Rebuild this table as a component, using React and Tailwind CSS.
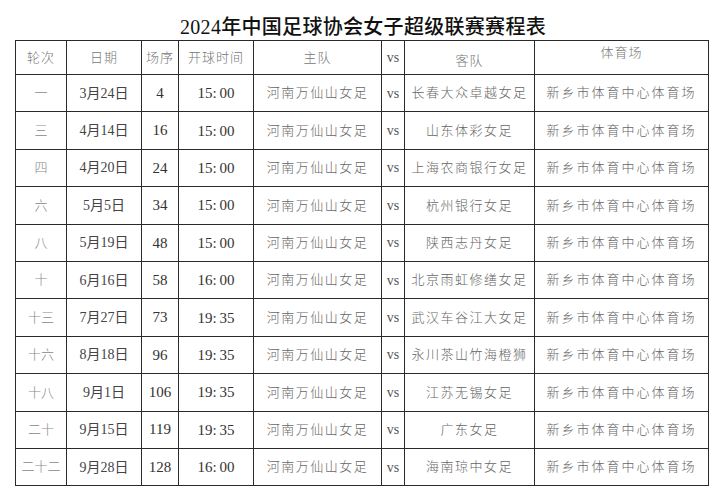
import React from "react";

const rows = [
  ["一", "3月24日", "4", "15:00", "长春大众卓越女足"],
  ["三", "4月14日", "16", "15:00", "山东体彩女足"],
  ["四", "4月20日", "24", "15:00", "上海农商银行女足"],
  ["六", "5月5日", "34", "15:00", "杭州银行女足"],
  ["八", "5月19日", "48", "15:00", "陕西志丹女足"],
  ["十", "6月16日", "58", "16:00", "北京雨虹修缮女足"],
  ["十三", "7月27日", "73", "19:35", "武汉车谷江大女足"],
  ["十六", "8月18日", "96", "19:35", "永川茶山竹海橙狮"],
  ["十八", "9月1日", "106", "19:35", "江苏无锡女足"],
  ["二十", "9月15日", "119", "19:35", "广东女足"],
  ["二十二", "9月28日", "128", "16:00", "海南琼中女足"],
];

const serif = "[font-family:'Liberation_Serif','Noto_Sans_CJK_SC',serif]";
const cell = "border border-[#2a2a2a] text-center align-middle p-0";

function Time({ t }) {
  const [h, m] = t.split(":");
  return (
    <span className="text-[15px] text-[#333]">
      {h}:<span className="ml-[3px]">{m}</span>
    </span>
  );
}

export default function App() {
  return (
    <div className={`w-[726px] h-[500px] bg-white ${serif}`}>
      <div className="h-[40px] pt-[15px] text-center text-[20px] leading-[25px] font-medium text-[#111] tracking-[0.3px]">
        2024年中国足球协会女子超级联赛赛程表
      </div>
      <table className="ml-[15px] w-[693px] table-fixed border-collapse">
        <colgroup>
          <col className="w-[51px]" />
          <col className="w-[75px]" />
          <col className="w-[37px]" />
          <col className="w-[75px]" />
          <col className="w-[128px]" />
          <col className="w-[23px]" />
          <col className="w-[130px]" />
          <col className="w-[174px]" />
        </colgroup>
        <thead>
          <tr className="h-[34px] text-[13px] text-[#777] font-light tracking-[1px]">
            <td className={cell}>轮次</td>
            <td className={cell}>日期</td>
            <td className={cell}>场序</td>
            <td className={cell}>开球时间</td>
            <td className={cell}>主队</td>
            <td className={`${cell} text-[14px] text-[#555] tracking-normal`}>vs</td>
            <td className={`${cell} pt-[6px]`}>客队</td>
            <td className={`${cell} align-top pt-[2px]`}>体育场</td>
          </tr>
        </thead>
        <tbody>
          {rows.map((r, i) => (
            <tr key={i} className="h-[37.4px]">
              <td className={`${cell} text-[13px] text-[#888] font-light`}>{r[0]}</td>
              <td className={`${cell} text-[14px] text-[#444]`}>{r[1]}</td>
              <td className={`${cell} text-[15px] text-[#333]`}>{r[2]}</td>
              <td className={cell}>
                <Time t={r[3]} />
              </td>
              <td className={`${cell} text-[13px] text-[#666] font-light tracking-[1.5px]`}>河南万仙山女足</td>
              <td className={`${cell} text-[14px] text-[#555]`}>vs</td>
              <td className={`${cell} text-[13px] text-[#666] font-light tracking-[1.5px]`}>{r[4]}</td>
              <td className={`${cell} text-[13px] text-[#666] font-light tracking-[2px]`}>新乡市体育中心体育场</td>
            </tr>
          ))}
        </tbody>
      </table>
    </div>
  );
}
